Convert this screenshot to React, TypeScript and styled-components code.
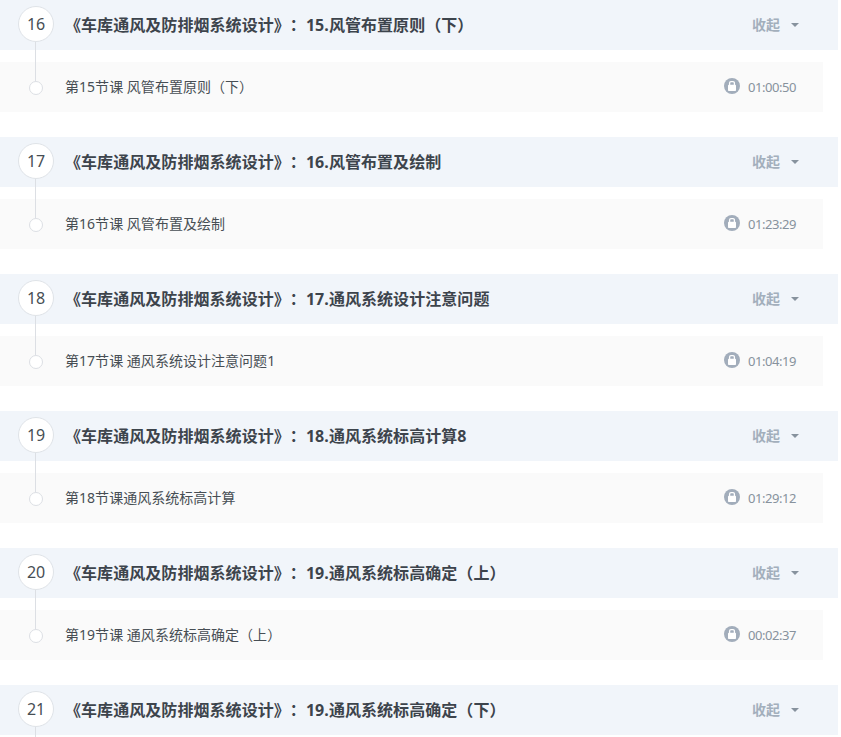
import React from 'react';
import styled, { createGlobalStyle } from 'styled-components';

interface Chapter {
  index: number;
  title: string;
  lesson?: string;
  duration?: string;
}

const chapters: Chapter[] = [
  { index: 16, title: '15.风管布置原则（下）', lesson: '第15节课 风管布置原则（下）', duration: '01:00:50' },
  { index: 17, title: '16.风管布置及绘制', lesson: '第16节课 风管布置及绘制', duration: '01:23:29' },
  { index: 18, title: '17.通风系统设计注意问题', lesson: '第17节课 通风系统设计注意问题1', duration: '01:04:19' },
  { index: 19, title: '18.通风系统标高计算8', lesson: '第18节课通风系统标高计算', duration: '01:29:12' },
  { index: 20, title: '19.通风系统标高确定（上）', lesson: '第19节课 通风系统标高确定（上）', duration: '00:02:37' },
  { index: 21, title: '19.通风系统标高确定（下）' },
];

const GlobalStyle = createGlobalStyle`
  body {
    margin: 0;
    background: #fff;
    font-family: 'Noto Sans', 'Noto Sans CJK SC', sans-serif;
    text-spacing-trim: space-all;
  }
`;

const List = styled.div`
  height: 737px;
  overflow: hidden;
`;

const Section = styled.section`
  margin-bottom: 25px;
`;

const Header = styled.div`
  display: flex;
  align-items: center;
  box-sizing: border-box;
  width: 838px;
  height: 50px;
  padding: 0 39px 0 18px;
  background: #f1f5fa;
`;

const Badge = styled.div`
  position: relative;
  box-sizing: border-box;
  flex: none;
  width: 36px;
  height: 36px;
  margin: 0 11px 2px 0;
  border: 1px solid #dfe3e8;
  border-radius: 50%;
  background: #fff;
  color: #474e54;
  font-size: 16px;
  letter-spacing: -0.2px;
  line-height: 34px;
  text-align: center;

  /* timeline running down to the lesson dot */
  &::after {
    content: '';
    position: absolute;
    top: 35px;
    left: 16px;
    width: 1px;
    height: 39px;
    background: #dcdfe4;
  }
`;

const Title = styled.h3`
  flex: 1;
  margin: 0;
  color: #3d444c;
  font-size: 16px;
  font-weight: 700;
  letter-spacing: 0.06px;
  line-height: 50px;
  white-space: nowrap;
`;

const Toggle = styled.div`
  display: flex;
  align-items: center;
  gap: 11px;
  color: #a3afbc;
  font-size: 14px;
  font-weight: 700;
  line-height: 50px;
`;

const Caret = styled.span`
  border: 4px solid transparent;
  border-top-color: #87929d;
  border-bottom: 0;
`;

const Row = styled.div`
  display: flex;
  align-items: center;
  box-sizing: border-box;
  width: 823px;
  height: 50px;
  margin-top: 12px;
  padding: 0 26px 0 29px;
  background: #fafafa;
`;

const Dot = styled.span`
  box-sizing: border-box;
  width: 14px;
  height: 14px;
  margin: 2px 22px 0 0;
  border: 1px solid #dcdfe4;
  border-radius: 50%;
  background: #fff;
`;

const LessonName = styled.span`
  flex: 1;
  color: #474e54;
  font-size: 14px;
  letter-spacing: 0.03px;
  line-height: 50px;
`;

const Lock = styled.svg`
  width: 16px;
  height: 16px;
  margin: 0 8px 2px 0;
`;

const Time = styled.span`
  width: 49px;
  color: #87929d;
  font-size: 13px;
  letter-spacing: -0.45px;
  line-height: 50px;
`;

const LockIcon = () => (
  <Lock viewBox="0 0 16 16">
    <circle cx="8" cy="8" r="8" fill="#a2adbb" />
    <path d="M5.6 7.5V5a1.4 1.4 0 0 1 1.4-1.4h2A1.4 1.4 0 0 1 10.4 5v2.5" fill="none" stroke="#fff" strokeWidth="1.3" />
    <rect x="4" y="6.7" width="8" height="6.3" rx="0.8" fill="#fff" />
  </Lock>
);

const ChapterSection = (props: Chapter) => (
  <Section>
    <Header>
      <Badge>{props.index}</Badge>
      <Title>{`《车库通风及防排烟系统设计》：${props.title}`}</Title>
      <Toggle>
        收起
        <Caret />
      </Toggle>
    </Header>
    {props.lesson && (
      <Row>
        <Dot />
        <LessonName>{props.lesson}</LessonName>
        <LockIcon />
        <Time>{props.duration}</Time>
      </Row>
    )}
  </Section>
);

const App = () => (
  <>
    <GlobalStyle />
    <List>
      {chapters.map((chapter) => (
        <ChapterSection key={chapter.index} {...chapter} />
      ))}
    </List>
  </>
);

export default App;
